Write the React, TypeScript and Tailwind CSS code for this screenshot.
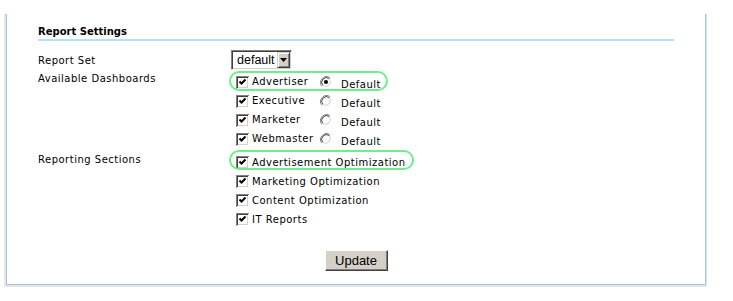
import React from "react";

const font = { fontFamily: '"DejaVu Sans", Verdana, sans-serif' };

function Check() {
  return (
    <svg width="13" height="13" viewBox="0 0 13 13" className="shrink-0">
      <rect x="0" y="0" width="13" height="13" fill="#808080" />
      <rect x="1" y="1" width="12" height="12" fill="#ffffff" />
      <rect x="1" y="1" width="11" height="11" fill="#404040" />
      <rect x="2" y="2" width="10" height="10" fill="#d4d0c8" />
      <rect x="2" y="2" width="9" height="9" fill="#ffffff" />
      <path d="M3.5 5.5 L5.5 7.5 L9.5 3.5" fill="none" stroke="#000" strokeWidth="2" />
    </svg>
  );
}

function Radio({ on }: { on?: boolean }) {
  return (
    <svg width="12" height="12" viewBox="0 0 12 12" className="shrink-0">
      <path d="M1.8 10.2 A6 6 0 0 1 10.2 1.8" fill="none" stroke="#808080" strokeWidth="1" />
      <path d="M10.2 1.8 A6 6 0 0 1 1.8 10.2" fill="none" stroke="#ffffff" strokeWidth="1" />
      <circle cx="6" cy="6" r="4.6" fill="#fff" />
      <path d="M2.7 9.3 A4.7 4.7 0 0 1 9.3 2.7" fill="none" stroke="#404040" strokeWidth="1" />
      <path d="M9.3 2.7 A4.7 4.7 0 0 1 2.7 9.3" fill="none" stroke="#d4d0c8" strokeWidth="1" />
      {on && <circle cx="6" cy="6" r="2" fill="#000" />}
    </svg>
  );
}

const dashboards = ["Advertiser", "Executive", "Marketer", "Webmaster"];
const sections = [
  "Advertisement Optimization",
  "Marketing Optimization",
  "Content Optimization",
  "IT Reports",
];

export default function App() {
  return (
    <div className="w-[733px] h-[301px] bg-white overflow-hidden text-black" style={font}>
      <div className="ml-[4px] mt-[14px] w-[703px] border-l-2 border-r border-b-2 border-[#e6e6e6]">
        <div className="border-l border-r border-b border-[#a6c3e0] px-[31px] pt-[12px] pb-[13px]">
          <div className="text-[10px] leading-[12px] font-bold pb-[1px] border-b-2 border-[#b3e2fb]">
            Report Settings
          </div>

          <div className="mt-[9px] flex h-[22px]">
            <div className="w-[193px] text-[10px] leading-[12px] tracking-[0.5px] pt-[5px]">Report Set</div>
            <div
              className="w-[61px] h-[20px] flex items-stretch bg-white border border-t-[#808080] border-l-[#808080] border-b-white border-r-white shadow-[inset_1px_1px_0_#404040,inset_-1px_-1px_0_#d4d0c8] p-[1px]"
            >
              <div
                className="flex-1 pl-[4px] text-[12.5px] leading-[16px]"
                style={{ fontFamily: '"Liberation Sans", Arial, sans-serif' }}
              >
                default
              </div>
              <div className="w-[13px] bg-[#d4d0c8] border border-t-[#d4d0c8] border-l-[#d4d0c8] border-b-[#404040] border-r-[#404040] shadow-[inset_1px_1px_0_#ffffff,inset_-1px_-1px_0_#808080] flex items-center justify-center">
                <svg width="7" height="4" viewBox="0 0 7 4">
                  <path d="M0 0 H7 L3.5 4 Z" fill="#000" />
                </svg>
              </div>
            </div>
          </div>

          <div className="flex">
            <div className="w-[193px] text-[10px] leading-[12px] tracking-[0.5px] pt-[1px]">Available Dashboards</div>
            <div className="flex flex-col">
              {dashboards.map((d, i) => (
                <div key={d} className="relative flex items-start h-[19px] pl-[5px] text-[10px] leading-[19px] tracking-[0.5px]">
                  {i === 0 && (
                    <div className="absolute -left-[2px] -top-[1px] w-[159px] h-[20px] rounded-[10px] border-2 border-[#6bef8e]" />
                  )}
                  <div className="mt-[4px]">
                    <Check />
                  </div>
                  <span className="ml-[3px] w-[68px] whitespace-nowrap">{d}</span>
                  <div className="mt-[4px]">
                    <Radio on={i === 0} />
                  </div>
                  <span className="ml-[9px] pt-[3px]">Default</span>
                </div>
              ))}
            </div>
          </div>

          <div className="flex mt-[5px]">
            <div className="w-[193px] text-[10px] leading-[12px] tracking-[0.5px] pt-[1px]">Reporting Sections</div>
            <div className="flex flex-col">
              {sections.map((s, i) => (
                <div key={s} className="relative flex items-start h-[19px] pl-[5px] text-[10px] leading-[19px] tracking-[0.5px]">
                  {i === 0 && (
                    <div className="absolute -left-[2px] -top-[3px] w-[185px] h-[20px] rounded-[10px] border-2 border-[#6bef8e]" />
                  )}
                  <div className="mt-[3px]">
                    <Check />
                  </div>
                  <span className="ml-[3px] whitespace-nowrap">{s}</span>
                </div>
              ))}
            </div>
          </div>

          <div className="mt-[21px] flex justify-center">
            <div
              className="w-[63px] h-[21px] bg-[#d4d0c8] border border-t-[#ffffff] border-l-[#ffffff] border-b-[#404040] border-r-[#404040] shadow-[inset_-1px_-1px_0_#808080] flex items-center justify-center text-[13px]"
              style={{ fontFamily: '"Liberation Sans", Arial, sans-serif' }}
            >
              Update
            </div>
          </div>
        </div>
      </div>
    </div>
  );
}
